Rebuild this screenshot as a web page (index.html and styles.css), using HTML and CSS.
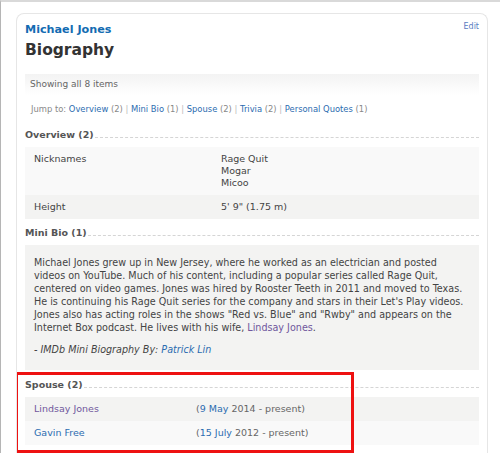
FILE: index.html
```html
<!DOCTYPE html>
<html>
<head>
<meta charset="utf-8">
<link rel="stylesheet" href="styles.css">
</head>
<body>
<div class="page">
  <div class="card">
    <div class="header">
      <div class="titles">
        <a class="name" href="#">Michael Jones</a>
        <h1 class="title">Biography</h1>
      </div>
      <a class="edit" href="#">Edit</a>
    </div>
    <div class="showing">Showing all 8 items</div>
    <div class="jump">Jump to: <a href="#">Overview</a> (2) <span class="sep">|</span> <a href="#">Mini Bio</a> (1) <span class="sep">|</span> <a href="#">Spouse</a> (2) <span class="sep">|</span> <a href="#">Trivia</a> (2) <span class="sep">|</span> <a href="#">Personal Quotes</a> (1)</div>

    <h2 class="sec"><span>Overview (2)</span></h2>
    <div class="table">
      <div class="row odd">
        <div class="label">Nicknames</div>
        <div class="value">Rage Quit<br>Mogar<br>Micoo</div>
      </div>
      <div class="row even">
        <div class="label">Height</div>
        <div class="value">5' 9" (1.75 m)</div>
      </div>
    </div>

    <h2 class="sec"><span>Mini Bio (1)</span></h2>
    <div class="bio">
      <p>Michael Jones grew up in New Jersey, where he worked as an electrician and posted videos on YouTube. Much of his content, including a popular series called Rage Quit, centered on video games. Jones was hired by Rooster Teeth in 2011 and moved to Texas. He is continuing his Rage Quit series for the company and stars in their Let's Play videos. Jones also has acting roles in the shows "Red vs. Blue" and "Rwby" and appears on the Internet Box podcast. He lives with his wife, <a class="visited" href="#">Lindsay Jones</a>.</p>
      <p class="author">- IMDb Mini Biography By: <a href="#">Patrick Lin</a></p>
    </div>

    <div class="spouse-wrap">
      <h2 class="sec first"><span>Spouse (2)</span></h2>
      <div class="table">
        <div class="row srow even">
          <div class="slabel"><a class="visited" href="#">Lindsay Jones</a></div>
          <div class="svalue">(<a href="#">9 May</a> 2014 - present)</div>
        </div>
        <div class="row srow odd">
          <div class="slabel"><a href="#">Gavin Free</a></div>
          <div class="svalue">(<a href="#">15 July</a> 2012 - present)</div>
        </div>
      </div>
      <div class="highlight"></div>
    </div>
  </div>
</div>
</body>
</html>
```

FILE: styles.css
```css
html, body {
  margin: 0;
  padding: 0;
  background: #ffffff;
  overflow: hidden;
}
body {
  font-family: "DejaVu Sans", Verdana, sans-serif;
  color: #333333;
  border-top: 2px solid #d9d9d9;
  border-left: 1px solid #b5b5b5;
  height: 453px;
  box-sizing: border-box;
}
a {
  color: #2b6cb0;
  text-decoration: none;
}
a.visited {
  color: #70579d;
}
.page {
  padding: 11px 12px 0 15px;
}
.card {
  box-sizing: border-box;
  border: 1px solid #e6e6e6;
  border-bottom: none;
  border-radius: 8px 8px 0 0;
  padding: 8px 8px 0 8px;
  height: 442px;
  overflow: hidden;
}
.header {
  display: flex;
  justify-content: space-between;
  align-items: flex-start;
}
.titles {
  display: flex;
  flex-direction: column;
}
.name {
  font-size: 11.2px;
  font-weight: bold;
  color: #136cb2;
  line-height: 16px;
}
.title {
  margin: 0;
  font-size: 15.5px;
  font-weight: bold;
  line-height: 24px;
  color: #333333;
}
.edit {
  font-size: 8px;
  margin-top: 0;
  color: #5a7cbf;
}
.showing {
  margin-top: 12px;
  height: 21px;
  line-height: 21px;
  padding-left: 5px;
  font-size: 9px;
  color: #666666;
  background: linear-gradient(#f3f3f3, #ffffff);
}
.jump {
  margin-top: 8px;
  padding-left: 6px;
  font-size: 8.4px;
  color: #888888;
  line-height: 12px;
}
.jump .sep {
  color: #bbbbbb;
}
.sec {
  margin: 14px 0 6px 0;
  font-size: 9.5px;
  font-weight: bold;
  color: #555555;
  display: flex;
  align-items: flex-end;
  line-height: 12px;
}
.sec::after {
  content: "";
  flex: 1;
  border-bottom: 1px dashed #d5d5d5;
  margin-bottom: 3px;
  margin-left: 1px;
}
.table + .sec {
  margin-top: 8px;
}
.sec.first {
  margin-top: 0;
}
.table .row {
  display: grid;
  grid-template-columns: 187px 1fr;
  font-size: 9.5px;
  color: #444444;
  line-height: 12px;
}
.row.odd {
  background: #f9f9f9;
}
.row.even {
  background: #f3f3f2;
}
.label, .value {
  padding: 6px 9px;
}
.bio {
  background: #f3f3f2;
  padding: 11px 9px 14px 9px;
  font-size: 9.6px;
  line-height: 13px;
  color: #444444;
}
.bio p {
  margin: 0 0 9px 0;
}
.bio p.author {
  margin: 0;
  font-style: italic;
}
.spouse-wrap {
  position: relative;
  margin-top: 9px;
}
.table .srow {
  grid-template-columns: 171px 1fr;
}
.srow .slabel, .srow .svalue {
  padding: 6px 9px;
}
.srow .svalue {
  color: #666666;
  padding-left: 0;
}
.highlight {
  position: absolute;
  left: -10px;
  top: -7px;
  width: 333px;
  height: 75px;
  border: 3px solid #ee1111;
  pointer-events: none;
}
```
